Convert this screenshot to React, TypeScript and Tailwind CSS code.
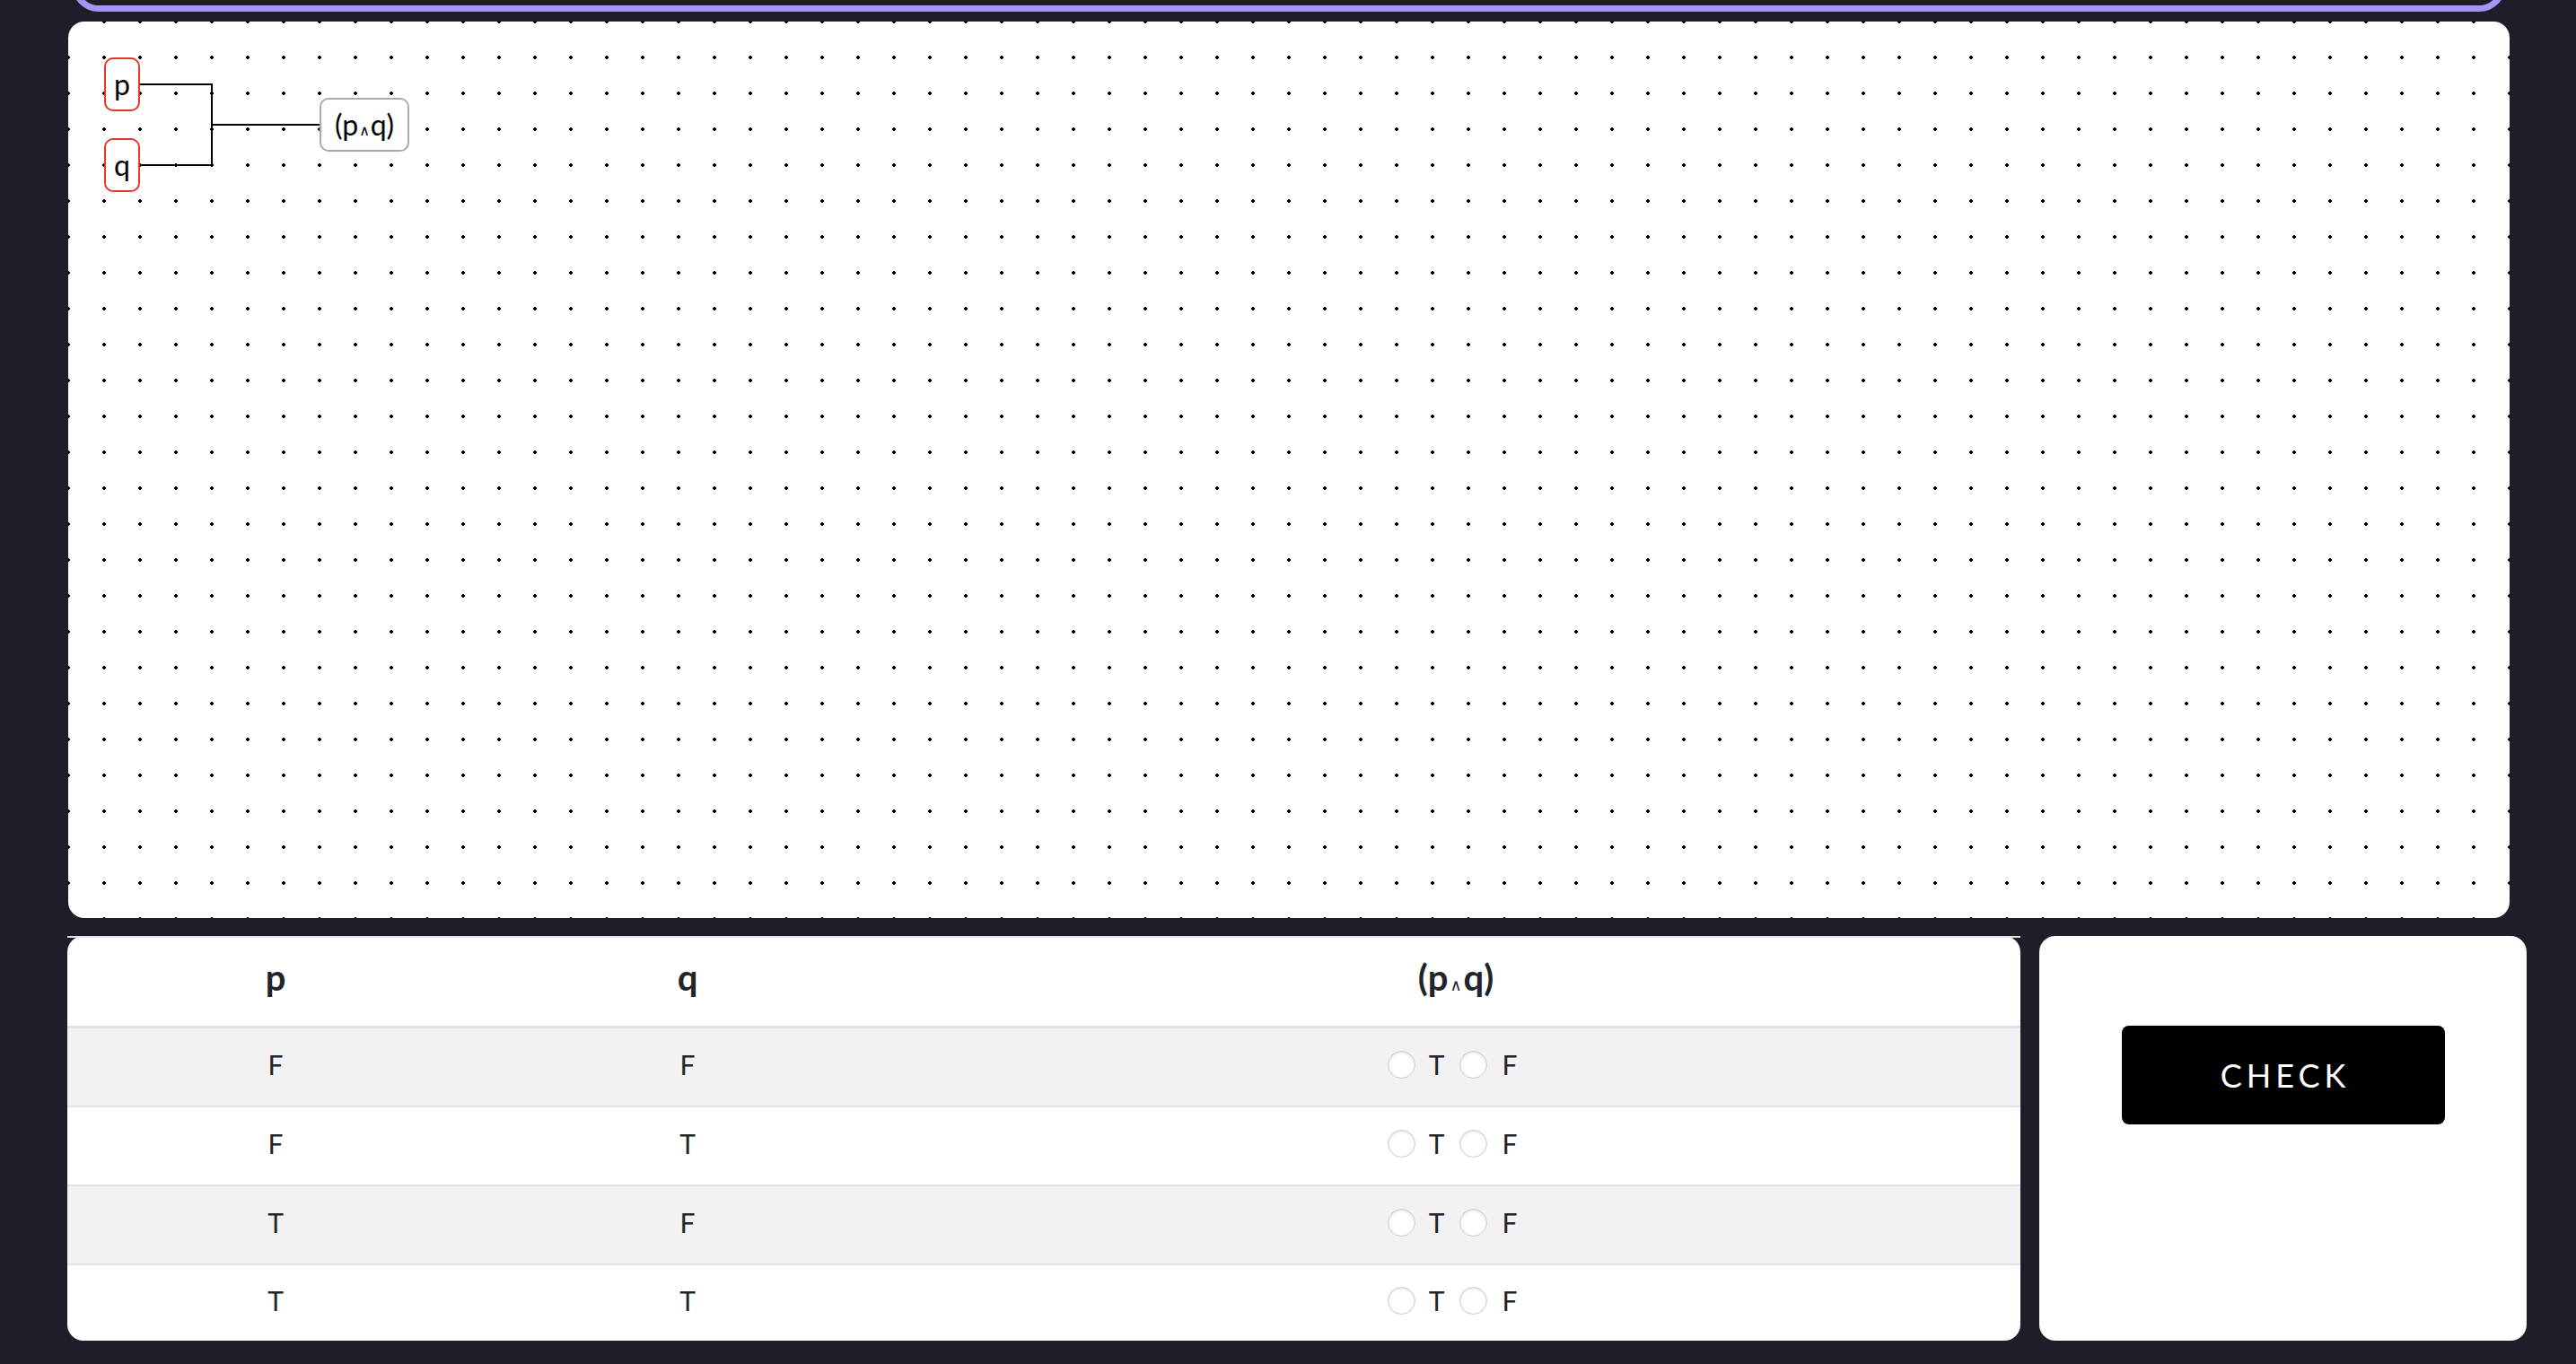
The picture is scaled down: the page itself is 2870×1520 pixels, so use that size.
import React from 'react'

interface TruthRow {
  p: string;
  q: string;
}

const rows: TruthRow[] = [
  { p: 'F', q: 'F' },
  { p: 'F', q: 'T' },
  { p: 'T', q: 'F' },
  { p: 'T', q: 'T' },
]

// small "and" sign, Lato has no glyph for it
const And: React.FC<{ big?: boolean }> = ({ big }) => (
  <span className={`font-['DejaVu_Sans',sans-serif] font-normal ${big ? 'text-[18px] mx-[2px]' : 'text-[16px] mx-[1px]'}`}>∧</span>
)

const Radio: React.FC = () => (
  <span className="inline-block w-[31px] h-[31px] rounded-full border border-[#cccccc] bg-white shadow-[inset_0_1px_3px_rgba(0,0,0,0.14)]" />
)

const Canvas: React.FC = () => (
  <div className="relative mt-[11px] ml-[76px] w-[2720px] h-[999px] rounded-[18px] bg-white bg-[radial-gradient(circle,#000_1.6px,transparent_2px)] bg-[length:40px_40px] bg-[position:-20px_-20px]">
    <svg className="absolute inset-0 pointer-events-none" width="2720" height="999">
      <path d="M80 70 H160 V160 H80 M160 115 H280" fill="none" stroke="#000" strokeWidth="2" />
    </svg>
    <div className="absolute left-[40px] top-[40px] w-[40px] h-[60px] rounded-[10px] border-2 border-[#e2372b] bg-white flex items-center justify-center text-[32px] text-black">
      p
    </div>
    <div className="absolute left-[40px] top-[130px] w-[40px] h-[60px] rounded-[10px] border-2 border-[#e2372b] bg-white flex items-center justify-center text-[32px] text-black">
      q
    </div>
    <div className="absolute left-[280px] top-[85px] w-[100px] h-[60px] rounded-[10px] border-2 border-[#ababab] bg-white flex items-center justify-center text-[32px] text-black">
      <span>(p<And />q)</span>
    </div>
  </div>
)

const TruthTable: React.FC = () => (
  <div className="w-[2176px] h-[451px] bg-white rounded-[18px] text-[#212529]">
    <div className="grid grid-cols-[464px_454px_1fr] h-[103px] border-t-2 border-b-[3px] border-[#dee2e6] items-center text-[40px] font-bold pb-[10px]">
      <div className="text-center">p</div>
      <div className="text-center">q</div>
      <div className="text-center">(p<And big />q)</div>
    </div>
    {rows.map((row, i) => (
      <div
        key={i}
        className={`grid grid-cols-[464px_454px_1fr] items-center text-[30px] pb-[6px] ${i % 2 === 0 ? 'bg-[#f2f2f2]' : ''} ${i === 0 ? 'h-[86px]' : i === 3 ? 'h-[86px] border-t-2 border-[#dee2e6]' : 'h-[88px] border-t-2 border-[#dee2e6]'}`}
      >
        <div className="text-center">{row.p}</div>
        <div className="text-center">{row.q}</div>
        <div className="flex items-center justify-center pr-[8px]">
          <Radio />
          <span className="ml-[15px] mr-[17px]">T</span>
          <Radio />
          <span className="ml-[16px]">F</span>
        </div>
      </div>
    ))}
  </div>
)

export default function App() {
  return (
    <div className="h-[1520px] overflow-hidden bg-[#1e1e28] font-['Lato',sans-serif]">
      <div className="-mt-[47px] ml-[80px] w-[2712px] h-[60px] rounded-[35px] border-[7px] border-[#a594f9]" />
      <Canvas />
      <div className="mt-[20px] ml-[75px] w-[2740px] flex gap-[21px]">
        <TruthTable />
        <div className="flex-1 h-[451px] bg-white rounded-[18px] flex justify-center pt-[100px]">
          <button className="w-[360px] h-[110px] bg-black rounded-[8px] text-white text-[36px] font-normal tracking-[5px] pl-[5px]">
            CHECK
          </button>
        </div>
      </div>
    </div>
  )
}
